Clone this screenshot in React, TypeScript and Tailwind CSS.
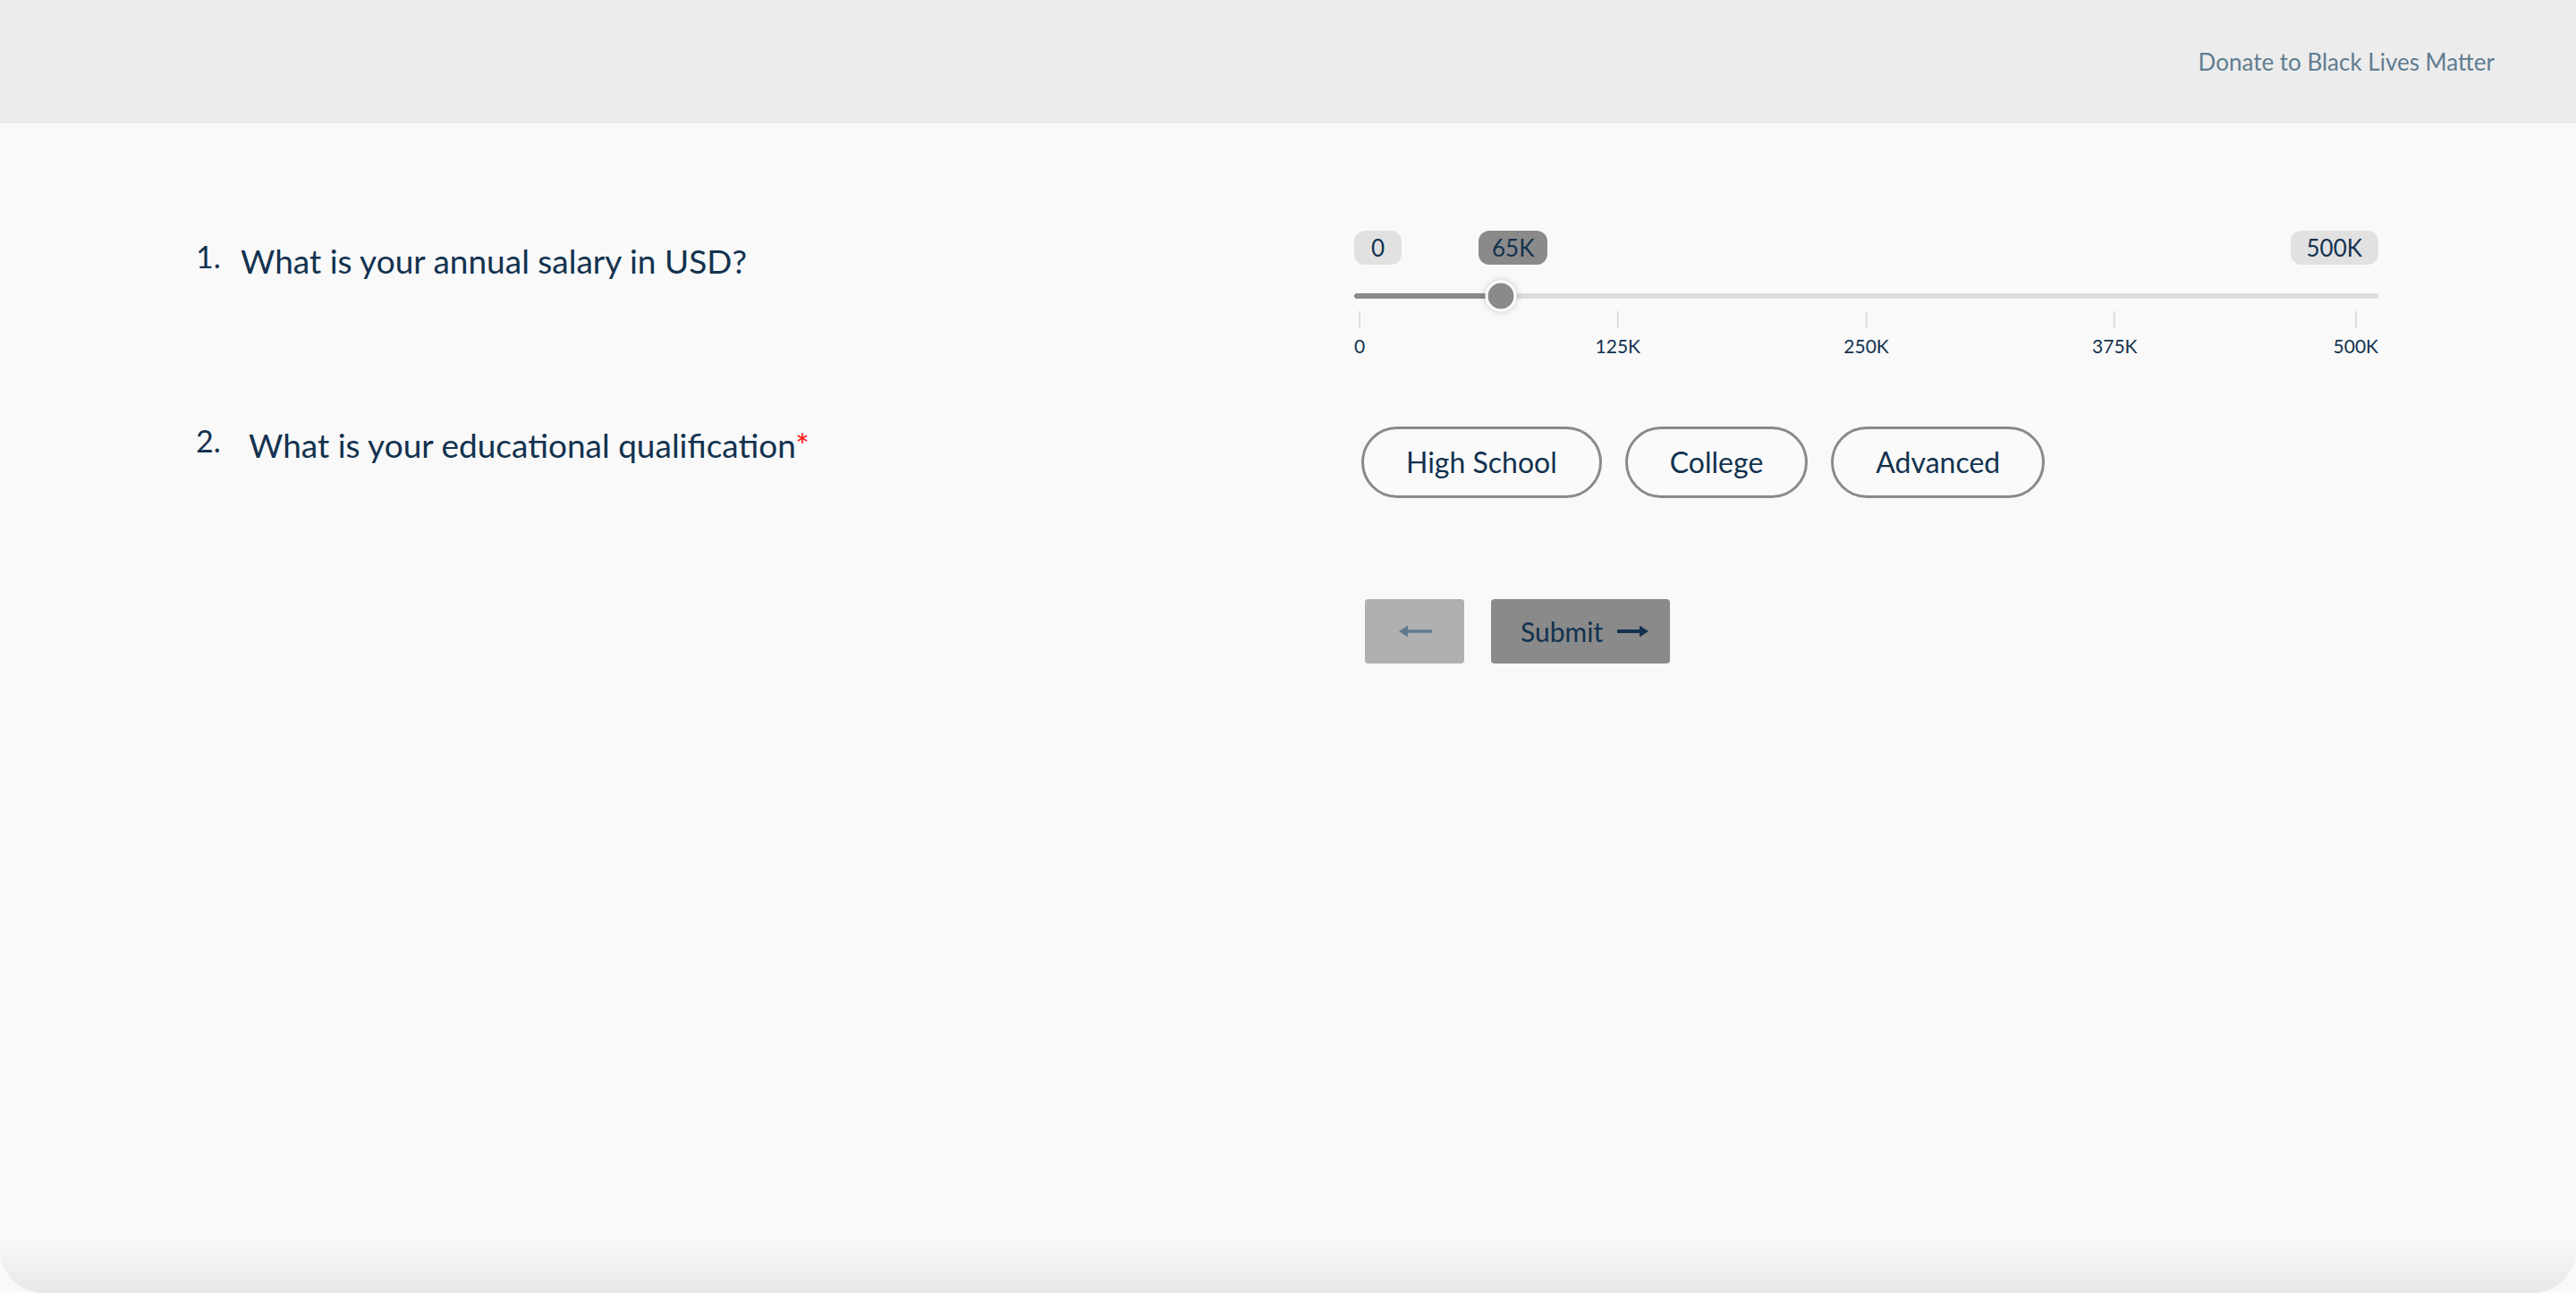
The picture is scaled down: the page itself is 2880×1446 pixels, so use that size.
import React, { useState } from 'react';

const font = { fontFamily: 'Lato, "Open Sans", sans-serif' };

const ticks = ['0', '125K', '250K', '375K', '500K'];
const levels = ['High School', 'College', 'Advanced'];

const ArrowLeft = () => (
  <svg width="38" height="16" viewBox="0 0 38 16" fill="none">
    <path d="M10 8H37" stroke="#5f7b90" strokeWidth="3.5" strokeLinecap="round" />
    <path d="M1 8L11 1.5V14.5Z" fill="#5f7b90" />
  </svg>
);

const ArrowRight = () => (
  <svg width="36" height="16" viewBox="0 0 36 16" fill="none">
    <path d="M1 8H26" stroke="#12324f" strokeWidth="4" strokeLinecap="round" />
    <path d="M35 8L25 1.5V14.5Z" fill="#12324f" />
  </svg>
);

// position inside the track, inset by the thumb radius
const along = (p: number) => `calc(17px + (100% - 34px) * ${p})`;

const SalarySlider: React.FC = () => {
  const value = 66;
  const max = 500;
  const thumbLeft = along(value / max);

  return (
    <div className="flex flex-col">
      <div className="relative flex h-[38px] justify-between">
        <span className="flex h-[38px] items-center rounded-[12px] bg-[#e1e1e1] px-[19px] text-[26px] leading-none text-[#12324f]">
          0
        </span>
        <span className="absolute left-[139px] top-0 flex h-[38px] items-center rounded-[12px] bg-[#8a8a8a] px-[15px] text-[26px] leading-none text-[#12324f]">
          65K
        </span>
        <span className="flex h-[38px] items-center rounded-[12px] bg-[#e1e1e1] px-[18px] text-[26px] leading-none text-[#12324f]">
          500K
        </span>
      </div>

      <div className="relative mt-[32px] h-[6px] rounded-full bg-[#dcdcdc]">
        <div className="h-full rounded-l-full bg-[#8a8a8a]" style={{ width: thumbLeft }} />
        <div
          className="absolute top-1/2 h-[35px] w-[35px] -translate-x-1/2 -translate-y-1/2 rounded-full border-[3px] border-white bg-[#8a8a8a] shadow-[0_0_8px_rgba(0,0,0,0.18)]"
          style={{ left: thumbLeft }}
        />
      </div>

      {/* scale marks: ends pinned to the edges, middle ones at their value */}
      <div className="relative mt-[14px] h-[50px]">
        {ticks.map((t, i) => {
          const last = i === ticks.length - 1;
          const mark = (
            <>
              <div className="h-[19px] w-[2px] bg-[#dedede]" />
              <span className="mt-[9px] text-[21px] leading-none text-[#12324f]">{t}</span>
            </>
          );
          if (i === 0)
            return (
              <div key={t} className="absolute left-0 top-0 flex flex-col items-center">
                {mark}
              </div>
            );
          if (last)
            return (
              <div key={t} className="absolute right-0 top-0 flex flex-col items-center">
                {mark}
              </div>
            );
          return (
            <div
              key={t}
              className="absolute top-0 flex -translate-x-1/2 flex-col items-center"
              style={{ left: along(i / (ticks.length - 1)) }}
            >
              {mark}
            </div>
          );
        })}
      </div>
    </div>
  );
};

export default function App() {
  const [level, setLevel] = useState<string | null>(null);

  return (
    <div className="flex min-h-screen flex-col bg-[#f9f9f9]" style={font}>
      {/* Top bar */}
      <header className="flex h-[138px] items-center justify-end bg-[#ececec] pr-[91px]">
        <a className="text-[26px] leading-none text-[#607c90]" href="#">
          Donate to Black Lives Matter
        </a>
      </header>

      <main className="flex-1 px-[221px] pt-[120px]">
        <div className="grid grid-cols-[1fr_1145px]">
          {/* Question 1 */}
          <div className="flex items-start pt-[15px] text-[#12324f]">
            <span className="-ml-[2px] -mt-[3px] w-[50px] text-[34px] leading-none">1.</span>
            <h2 className="text-[37px] leading-none">What is your annual salary in USD?</h2>
          </div>
          <SalarySlider />

          {/* Question 2 */}
          <div className="mt-[79px] flex items-start pt-[2px] text-[#12324f]">
            <span className="-ml-[2px] -mt-[3px] w-[59px] text-[34px] leading-none">2.</span>
            <h2 className="text-[37px] leading-none">
              What is your educational qualification<span className="text-[#ff1a1a]">*</span>
            </h2>
          </div>
          <div className="mt-[79px] flex gap-[26px] pl-[8px]">
            {levels.map((l) => (
              <button
                key={l}
                onClick={() => setLevel(l)}
                className={`flex h-[80px] items-center rounded-full border-[3px] border-[#8a8a8a] px-[47px] text-[32px] leading-none text-[#12324f] ${
                  level === l ? 'bg-[#e1e1e1]' : 'bg-[#fafafa]'
                }`}
              >
                {l}
              </button>
            ))}
          </div>

          {/* Navigation */}
          <div />
          <div className="mt-[113px] flex gap-[30px] pl-[12px]">
            <button className="flex h-[72px] w-[111px] items-center justify-center rounded-[4px] bg-[#b0b0b0]">
              <ArrowLeft />
            </button>
            <button className="flex h-[72px] w-[200px] items-center gap-[16px] rounded-[4px] bg-[#8a8a8a] pl-[33px] text-[30px] leading-none text-[#12324f]">
              Submit
              <ArrowRight />
            </button>
          </div>
        </div>
      </main>

      {/* bottom fade */}
      <div className="h-[64px] rounded-b-[48px] bg-gradient-to-b from-[#f9f9f9] to-[#e8e8e8]" />
    </div>
  );
}
